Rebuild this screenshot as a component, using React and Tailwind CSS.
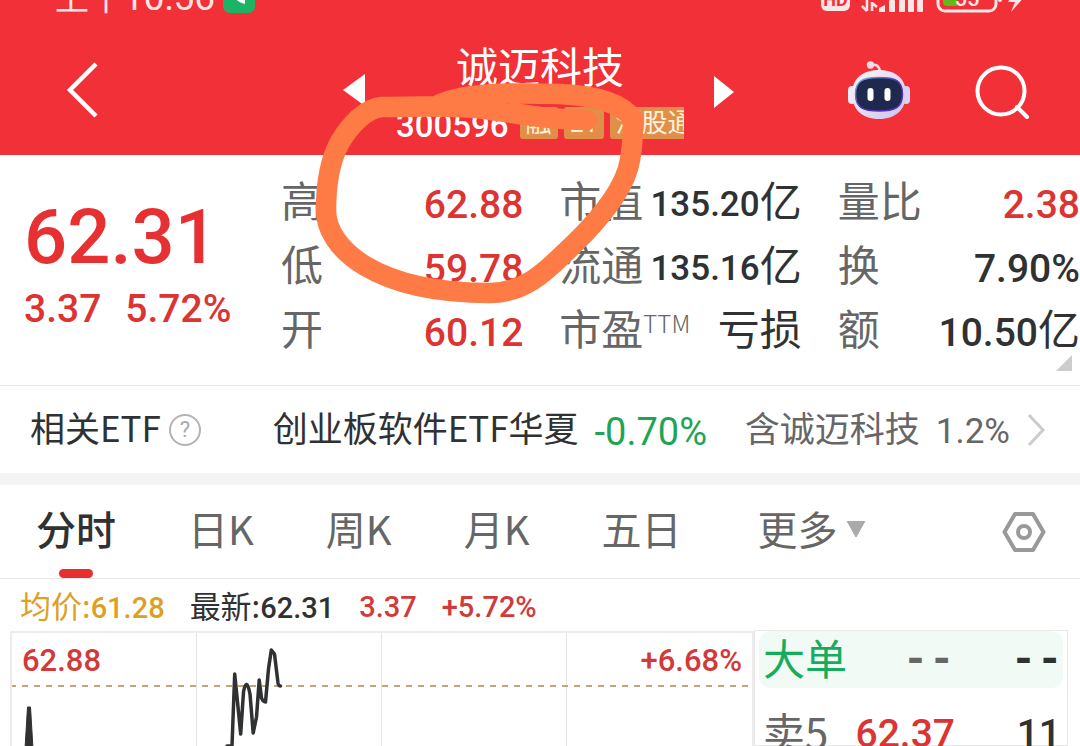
import React from "react";

const num = "font-['Roboto','Noto_Sans_CJK_SC',sans-serif]";

const stats = [
  [
    { label: "高", value: "62.88", tone: "text-[#db3433]" },
    { label: "低", value: "59.78", tone: "text-[#db3433]" },
    { label: "开", value: "60.12", tone: "text-[#db3433]" },
  ],
  [
    { label: "市值", value: "135.20", unit: "亿", small: true },
    { label: "流通", value: "135.16", unit: "亿", small: true },
    { label: "市盈", sup: "TTM", unit: "亏损" },
  ],
  [
    { label: "量比", value: "2.38", tone: "text-[#db3433]" },
    { label: "换", value: "7.90%" },
    { label: "额", value: "10.50", unit: "亿" },
  ],
];

const tabs = ["分时", "日K", "周K", "月K", "五日"];

function StatusBar() {
  return (
    <div className="flex h-4 items-end justify-between overflow-hidden pl-[55px] pr-[54px] text-[#ffe6e6]">
      <div className="flex items-end gap-2">
        <span className={`${num} text-[34px] leading-[30px]`}>上午<span className="text-[37px] leading-none">10:56</span></span>
        <svg className="mb-[3px] h-8 w-8" viewBox="0 0 32 32" aria-hidden="true">
          <rect width="32" height="32" rx="7" fill="#1cb464" />
          <path d="M8 8c1 8 6 13 14 15v-5l-4-2-2 2c-2-1-4-3-5-6l2-2-1-4z" fill="#fff" />
        </svg>
      </div>
      <svg className="h-8 w-[205px] shrink-0" viewBox="0 0 205 32" aria-hidden="true">
        <rect x="0" y="1" width="29" height="26" rx="6" fill="#ffe6e6" />
        <text x="14.5" y="22" textAnchor="middle" fontSize="18" fontWeight="700" fontFamily="Roboto" fill="#f23037">HD</text>
        <g fill="none" stroke="#ffe6e6" strokeWidth="2.5">
          <path d="M46 12v15M46 27l-5-5M51 27V18M51 19l5 4" />
        </g>
        <g fill="#ffe6e6">
          <path d="M58 28v-4l6-3v7z" />
          <rect x="68" y="16" width="6" height="12" rx="1" />
          <rect x="78" y="11" width="6" height="17" rx="1" />
          <rect x="87" y="6" width="6" height="22" rx="1" />
          <rect x="96" y="2" width="6" height="26" rx="1" />
          <path d="M196 0l-9 18h7l-4 10 15-17h-8l4-11z" />
          <rect x="177" y="11" width="4" height="7" rx="2" />
        </g>
        <rect x="117" y="2" width="58" height="25" rx="7" fill="none" stroke="#ffe6e6" strokeWidth="3" />
        <path d="M122 5h14v17h-10q-4 0-4-4z" fill="#65b81a" />
        <text x="146" y="22" textAnchor="middle" fontSize="22" fontWeight="500" fontFamily="Roboto" fill="#ffe6e6">55</text>
      </svg>
    </div>
  );
}

function Robot() {
  return (
    <svg className="h-[60px] w-16" viewBox="0 0 64 60" aria-hidden="true">
      <defs>
        <linearGradient id="shell" x1="0" y1="0" x2="1" y2="1">
          <stop offset="0" stopColor="#fff4f6" />
          <stop offset="0.5" stopColor="#e9dcf3" />
          <stop offset="1" stopColor="#c6c4f0" />
        </linearGradient>
        <linearGradient id="rim" x1="0" y1="0" x2="1" y2="1">
          <stop offset="0" stopColor="#7fc4d8" />
          <stop offset="0.5" stopColor="#4a35b8" />
          <stop offset="1" stopColor="#5b2fc0" />
        </linearGradient>
      </defs>
      <path d="M24 5q8-2 9 7" fill="none" stroke="#f6dbe6" strokeWidth="2.5" />
      <circle cx="23.500" cy="5" r="3.700" fill="#f6dbe6" />
      <rect x="1" y="26" width="8" height="18" rx="4" fill="#f3e9f6" />
      <rect x="55" y="26" width="8" height="18" rx="4" fill="#d9d2f4" />
      <path d="M32 10c17 0 27 9 27 24S49 59 32 59 5 49 5 34s10-24 27-24z" fill="url(#shell)" />
      <path d="M32 17.500c16 0 23.500 3 23.500 16.500S48 51 32 51 8.500 47.500 8.500 34 16 17.500 32 17.500z" fill="#1f294d" stroke="url(#rim)" strokeWidth="1.500" />
      <rect x="20.500" y="28" width="6" height="13" rx="3" fill="#fff" />
      <rect x="37.500" y="28" width="6" height="13" rx="3" fill="#fff" />
    </svg>
  );
}

function NavBar() {
  return (
    <div className="grid grid-cols-[1fr_288px_1fr] pb-4 pt-7 text-white">
      <div className="flex items-center justify-between pb-1 pl-[66px] pr-[30px]">
        <button aria-label="返回">
          <svg className="h-14 w-8" viewBox="0 0 32 56" aria-hidden="true">
            <path d="M30 2L4 28l26 26" fill="none" stroke="#fff" strokeWidth="4.500" />
          </svg>
        </button>
        <button aria-label="上一只">
          <svg className="h-8 w-6" viewBox="0 0 24 32" aria-hidden="true">
            <path d="M23 0v32L1 16z" fill="#fff" />
          </svg>
        </button>
      </div>
      <div className="overflow-hidden">
        <h1 className="h-[50px] text-center text-[42px] leading-[42px]">诚迈科技</h1>
        <div className="mt-[13px] flex items-center gap-[6px] leading-8">
          <span className={`${num} mr-[5px] h-8 text-[33px] font-medium leading-[38px]`}>300596</span>
          <span className="h-8 w-[38px] shrink-0 rounded-[3px] bg-[#e08f49] text-center text-[26px] leading-[28px] text-[#fff3dc]">融</span>
          <span className={`${num} h-8 w-10 shrink-0 rounded-[3px] bg-[#e08f49] text-center text-[26px] text-[#fff3dc]`}>L1</span>
          <span className="h-8 shrink-0 whitespace-nowrap rounded-[3px] bg-[#e08f49] px-[6px] text-[26px] leading-[28px] text-[#fff3dc]">沪股通</span>
        </div>
      </div>
      <div className="flex items-center justify-between pl-[30px] pr-[51px]">
        <button aria-label="下一只">
          <svg className="h-8 w-5" viewBox="0 0 20 32" aria-hidden="true">
            <path d="M0 0v32l20-16z" fill="#fff" />
          </svg>
        </button>
        <div className="flex items-center gap-16">
          <button aria-label="智能助手" className="pb-1"><Robot /></button>
          <button aria-label="搜索">
            <svg className="h-[54px] w-[54px]" viewBox="0 0 54 54" aria-hidden="true">
              <g fill="none" stroke="#fff" strokeWidth="4">
                <circle cx="26" cy="26" r="23.500" />
                <path d="M42 42l10 10" strokeLinecap="round" />
              </g>
            </svg>
          </button>
        </div>
      </div>
    </div>
  );
}

function Quote() {
  return (
    <section className="relative flex border-b border-[#eaeaea] pb-[22px] pt-4">
      <div className={`${num} w-[281px] shrink-0 pl-6 pt-6 font-medium text-[#e73031]`}>
        <div className="text-[76px] leading-[84px]">62.31</div>
        <div className="flex gap-6 text-[39px] leading-[60px] text-[#db3433]">
          <span>3.37</span>
          <span>5.72%</span>
        </div>
      </div>
      <div className="grid flex-1 grid-cols-3 gap-x-9">
        {stats.map((column, i) => (
          <dl key={i}>
            {column.map((item) => (
              <div key={item.label} className="flex h-16 items-center justify-between whitespace-nowrap leading-[56px]">
                <dt className="flex pb-2 text-[42px] text-[#666]">
                  {item.label}
                  {item.sup && <sup className="top-0 text-[24px] font-light leading-[48px]">{item.sup}</sup>}
                </dt>
                <dd className={`flex items-center ${item.tone || "text-[#303132]"}`}>
                  {item.value && (
                    <span className={`${num} pt-1 font-medium ${item.small ? "text-[35px]" : "text-[39px]"}`}>{item.value}</span>
                  )}
                  {item.unit && <span className="pb-2 text-[42px]">{item.unit}</span>}
                </dd>
              </div>
            ))}
          </dl>
        ))}
      </div>
      <svg className="absolute bottom-[14px] right-2 h-4 w-4" viewBox="0 0 16 16" aria-hidden="true">
        <path d="M16 0v16H0z" fill="#ccc" />
      </svg>
    </section>
  );
}

function RelatedEtf() {
  return (
    <section className="flex h-[99px] shrink-0 items-center justify-between whitespace-nowrap border-b-[12px] border-[#f4f4f4] pl-[30px] pr-[34px] text-[35px] leading-[50px] text-[#303132]">
      <div className="flex items-center gap-2">
        <span className="pb-1.5">相关ETF</span>
        <button aria-label="说明" className={`${num} flex h-8 w-8 items-center justify-center rounded-full border-2 border-[#b3b3b3] text-[22px] leading-none text-[#aaa]`}>?</button>
      </div>
      <a href="#etf" className="ml-[34px] flex items-center gap-4">
        <span className="pb-1.5">创业板软件ETF华夏</span>
        <span className={`${num} pt-1 text-[38px] text-[#1fa354]`}>-0.70%</span>
      </a>
      <a href="#holding" className="flex items-center gap-4 text-[#666]">
        <span className="pb-1.5">含诚迈科技</span>
        <span className={`${num} pt-1 text-[35px]`}>1.2%</span>
        <svg className="h-8 w-5" viewBox="0 0 20 32" aria-hidden="true">
          <path d="M3 1l14 15L3 31" fill="none" stroke="#ccc" strokeWidth="3" />
        </svg>
      </a>
    </section>
  );
}

function Tabs() {
  return (
    <nav className="flex items-center gap-[72px] whitespace-nowrap border-b border-[#e6e6e6] pb-1.5 pl-9 pr-[34px] text-[40px] leading-[87px] text-[#666]">
      {tabs.map((tab, i) => (
        <button key={tab} className={i === 0 ? "relative font-medium text-[#303132]" : ""}>
          {tab}
          {i === 0 && <span className="absolute -bottom-1.5 left-1/2 h-[9px] w-[34px] -translate-x-1/2 rounded-full bg-[#e62f2f]" />}
        </button>
      ))}
      <button className="ml-1 flex items-center gap-2">
        更多
        <svg className="h-4 w-5" viewBox="0 0 20 16" aria-hidden="true">
          <path d="M1 0h18L10 16z" fill="#aaa" stroke="#aaa" strokeLinejoin="round" />
        </svg>
      </button>
      <button aria-label="设置" className="ml-auto pt-1.5">
        <svg className="h-[42px] w-11" viewBox="0 0 44 42" aria-hidden="true">
          <g fill="none" stroke="#999" strokeWidth="4" strokeLinejoin="round">
            <path d="M13 3h18l10.500 18L31 39H13L2.500 21z" />
            <circle cx="22" cy="21" r="6" />
          </g>
        </svg>
      </button>
    </nav>
  );
}

function Chart() {
  return (
    <div className="relative h-full min-w-0 flex-1 overflow-hidden border-2 border-b-0 border-[#ececec]">
      <div className="absolute inset-0 grid grid-cols-4 divide-x divide-[#e4e4e4]">
        <div /><div /><div /><div />
      </div>
      <svg className="absolute left-0 top-0 h-[114px] w-full" aria-hidden="true">
        <line x1="-2" y1="53" x2="100%" y2="53" stroke="#bda77c" strokeWidth="2" strokeDasharray="6 6" />
        <path d="M13 116L15.500 74h3L21 116z" fill="#303132" stroke="#303132" strokeLinejoin="round" />
        <path
          d="M215 113h5L222.700 41L228.700 101L231.500 59Q234.500 43 238 61L241.200 100L244.500 84L247.200 47L249.500 65Q251 69 253.500 69L256.500 36L259.300 17L262.500 21L266 50Q266.500 53 268.500 53"
          fill="none"
          stroke="#303132"
          strokeWidth="3.500"
          strokeLinejoin="round"
          strokeLinecap="round"
        />
      </svg>
      <div className={`${num} relative flex justify-between px-[10px] pt-2.5 text-[31px] font-medium leading-9 text-[#d23a3a]`}>
        <span>62.88</span>
        <span>+6.68%</span>
      </div>
    </div>
  );
}

function OrderBook() {
  return (
    <div className="-mt-px w-[314px] shrink-0 border border-[#e8e8e8] px-1">
      <table className="w-full table-fixed whitespace-nowrap text-[42px] leading-[48px] text-[#666]">
        <colgroup>
          <col className="w-[88px]" />
          <col className="w-[108px]" />
          <col />
        </colgroup>
        <tbody>
          <tr className="h-[57px]">
            <th scope="row" className="rounded-l-xl bg-[#f2faf6] pb-1.5 pl-1 text-left font-normal text-[#14ad5c]">大单</th>
            <td className="bg-[#f2faf6] text-right font-['Liberation_Mono',monospace] text-[44px] font-bold">--</td>
            <td className="rounded-r-xl bg-[#f2faf6] text-right font-['Liberation_Mono',monospace] text-[44px] font-bold text-[#303132]">--</td>
          </tr>
          <tr className="h-[92px]">
            <th scope="row" className="pb-1.5 pl-1 text-left font-normal">卖5</th>
            <td className={`${num} text-right text-[39px] font-medium text-[#db3433]`}>62.37</td>
            <td className={`${num} pr-[2px] text-right text-[39px] font-medium text-[#303132]`}>11</td>
          </tr>
        </tbody>
      </table>
    </div>
  );
}

function Annotation() {
  return (
    <svg className="pointer-events-none absolute left-1/2 top-0 h-[320px] w-[400px] -translate-x-[240px]" viewBox="300 0 400 320" aria-hidden="true">
      <path
        d="M587 120C550 120 520 114 485 109C450 105 415 107 382 107C366 108 350 125 340 142C330 160 326 185 326 210C326 248 375 293 490 293C530 293 553 263 573 245C605 214 626 185 630 160C633 145 633 135 633 119C622 104 600 96 560 94C495 92 460 95 440 104"
        fill="none"
        stroke="#ff7b45"
        strokeWidth="20.500"
        strokeLinecap="round"
        strokeLinejoin="round"
      />
    </svg>
  );
}

export default function App() {
  return (
    <div className="relative flex h-screen flex-col overflow-hidden bg-white font-['Noto_Sans_CJK_SC',sans-serif]">
      <header className="bg-[#f23037]">
        <StatusBar />
        <NavBar />
      </header>
      <Quote />
      <RelatedEtf />
      <Tabs />
      <div className="flex h-[52px] shrink-0 items-center gap-[25px] whitespace-nowrap pl-5 text-[31px] leading-[48px] text-[#303132]">
        <span className="text-[#dda022]">均价:<b className={`${num} text-[29px] font-medium leading-none`}>61.28</b></span>
        <span>最新:<b className={`${num} text-[29px] font-medium leading-none`}>62.31</b></span>
        <span className={`${num} pt-1 text-[29px] font-medium text-[#d23a3a]`}>3.37</span>
        <span className={`${num} pt-1 text-[29px] font-medium text-[#d23a3a]`}>+5.72%</span>
      </div>
      <div className="flex min-h-0 flex-1 pl-[10px] pr-3">
        <Chart />
        <OrderBook />
      </div>
      <Annotation />
    </div>
  );
}
